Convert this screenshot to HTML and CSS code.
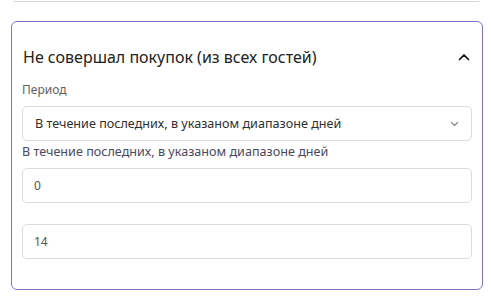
FILE: index.html
```html
<!DOCTYPE html>
<html lang="ru">
<head>
    <meta charset="UTF-8">
    <meta name="viewport" content="width=device-width, initial-scale=1.0">
    <title>Фильтр</title>
    <link rel="stylesheet" href="styles.css">
</head>
<body>
    <div class="prev-card"></div>

    <div class="filter-card">
        <div class="filter-header">
            <div class="filter-title">Не совершал покупок (из всех гостей)</div>
            <svg class="chevron-up" width="12" height="8" viewBox="0 0 12 8">
                <path d="M1.5 6.5 L6 2 L10.5 6.5" fill="none" stroke="#111" stroke-width="1.7" stroke-linecap="round" stroke-linejoin="round"/>
            </svg>
        </div>

        <div class="field-label">Период</div>
        <div class="select-box">
            <span>В течение последних, в указаном диапазоне дней</span>
            <svg class="chevron-down" width="9" height="6" viewBox="0 0 9 6">
                <path d="M1.5 1.5 L4.5 4.5 L7.5 1.5" fill="none" stroke="#8a8a8a" stroke-width="1.2" stroke-linecap="round" stroke-linejoin="round"/>
            </svg>
        </div>

        <div class="field-hint">В течение последних, в указаном диапазоне дней</div>
        <div class="input-box">0</div>
        <div class="input-box second">14</div>
    </div>
</body>
</html>
```

FILE: styles.css
```css
* {
    margin: 0;
    padding: 0;
    box-sizing: border-box;
}

html, body {
    width: 100%;
    height: 100%;
    overflow: hidden;
    background-color: #fff;
    font-family: 'Noto Sans', 'Open Sans', sans-serif;
    color: #2b2b2b;
}

body {
    padding: 0 8px 0 11px;
}

.prev-card {
    height: 2px;
    margin: 0 3px 0 2px;
    border-bottom: 1px solid #d6d6d6;
    border-radius: 0 0 4px 4px;
}

.filter-card {
    margin-top: 19px;
    width: 472px;
    border: 1px solid #7f72c2;
    border-radius: 6px;
    padding: 24px 10px 30px 10px;
}

.filter-header {
    display: flex;
    align-items: center;
    justify-content: space-between;
    height: 22px;
    padding-left: 1px;
}

.filter-title {
    font-size: 16px;
    line-height: 22px;
    color: #222;
}

.chevron-up {
    margin-right: 2px;
}

.field-label {
    margin-top: 14px;
    font-size: 12px;
    line-height: 16px;
    color: #606060;
}

.select-box {
    margin-top: 8px;
    height: 35px;
    border: 1px solid #dcdcdc;
    border-radius: 5px;
    display: flex;
    align-items: center;
    justify-content: space-between;
    padding: 0 12px 0 12px;
    font-size: 12.6px;
    color: #2f2f2f;
}

.field-hint {
    margin-top: 3px;
    font-size: 12.6px;
    line-height: 16px;
    color: #4b4760;
}

.input-box {
    margin-top: 8px;
    height: 35px;
    border: 1px solid #dcdcdc;
    border-radius: 5px;
    display: flex;
    align-items: center;
    padding-left: 11px;
    font-size: 12px;
    color: #555;
}

.input-box.second {
    margin-top: 21px;
}
```
